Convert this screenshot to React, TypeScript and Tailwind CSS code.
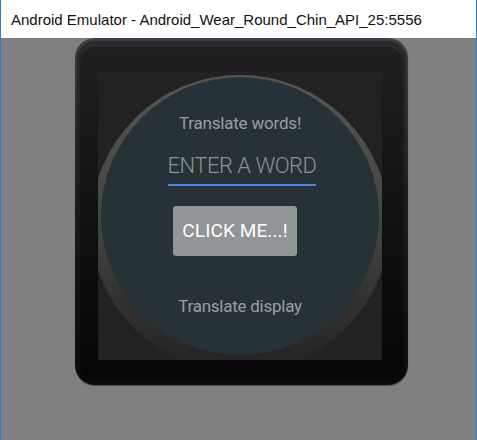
import React from 'react';

export default function App() {
  return (
    <div className="w-[477px] h-[440px] flex flex-col bg-[#808080] border-x border-[#2b7bd4] overflow-hidden">
      {/* Window title bar */}
      <div className="h-[38px] shrink-0 bg-white flex items-center pl-[10px]">
        <span className="text-[15px] text-[#111] font-['Liberation_Sans',sans-serif] leading-none">
          Android Emulator - Android_Wear_Round_Chin_API_25:5556
        </span>
      </div>

      {/* Emulator body */}
      <div className="flex-1 pl-[74px]">
        <div className="w-[333px] h-[347px] rounded-[20px] bg-gradient-to-b from-[#3e3e42] via-[#1c1c1f] to-[#0c0c0e] pt-[3px] px-[2px] pb-[2px] shadow-[0_1px_1px_rgba(0,0,0,0.4)]">
          <div className="h-full rounded-[18px] bg-gradient-to-b from-[#2a2a2e] to-[#0a0a0c] pt-[6px] px-[3px] pb-[3px]">
            <div className="h-full rounded-[16px] bg-gradient-to-b from-[#1f1f22] to-[#060608] pt-[25px] pl-[18px]">
              {/* Watch screen */}
              <div className="w-[284px] h-[288px] bg-[#222222] overflow-hidden flex justify-center pt-[3px]">
                <div className="w-[298px] h-[298px] shrink-0 rounded-full bg-gradient-to-b from-[#555555] via-[#444444] to-[#222222] flex justify-center pt-[2px]">
                  <div className="w-[278px] h-[278px] rounded-full bg-[#263238] flex flex-col items-center font-['Roboto',sans-serif] text-[#9a9ea0]">
                    <div className="mt-[35px] text-[17px] leading-[22px] tracking-[-0.2px]">Translate words!</div>
                    <div className="mt-[18px] ml-[4px] w-[148px] flex flex-col items-center">
                      <div className="whitespace-nowrap text-[22px] leading-[28px] font-light text-[#8c9194] tracking-[-0.5px]">ENTER A WORD</div>
                      <div className="mt-[4px] h-[2px] w-full bg-[#4a88e8]"></div>
                    </div>
                    <button className="mt-[20px] mr-[10px] w-[124px] h-[50px] rounded-[3px] bg-[#909598] text-white text-[19px] font-normal tracking-[0.1px]">
                      CLICK ME...!
                    </button>
                    <div className="mt-[38px] text-[17px] leading-[24px] tracking-[-0.25px]">Translate display</div>
                  </div>
                </div>
              </div>
            </div>
          </div>
        </div>
      </div>
    </div>
  );
}
